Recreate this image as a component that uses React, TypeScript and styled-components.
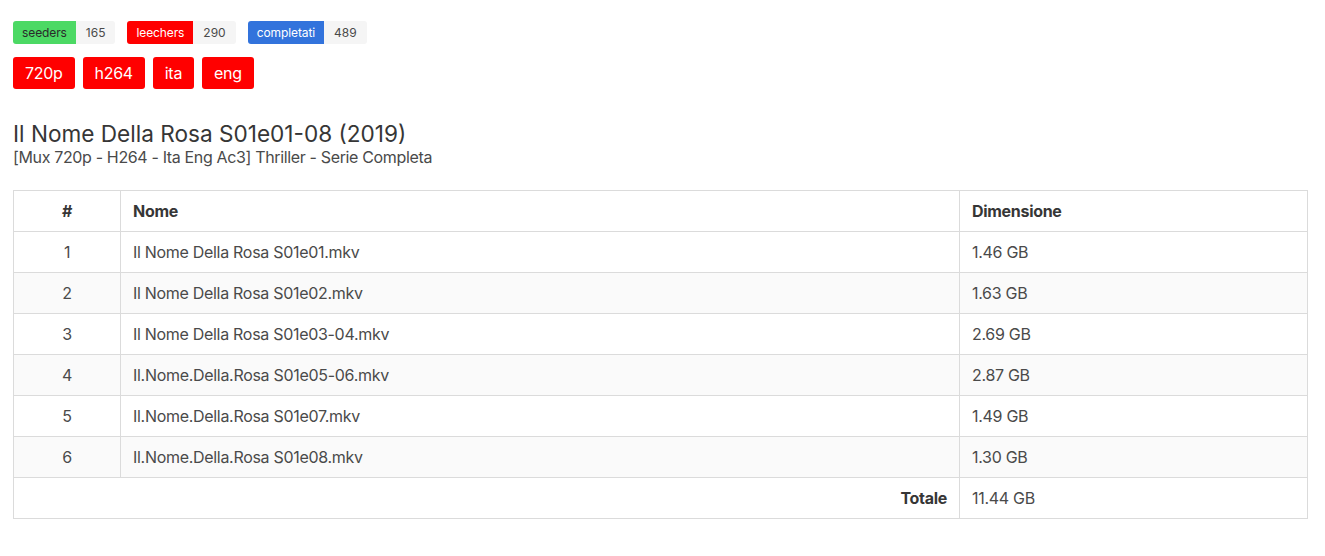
import React from "react";
import styled, { createGlobalStyle } from "styled-components";

const Global = createGlobalStyle`
  html, body { margin: 0; padding: 0; background: #fff; }
  body { font-family: Inter, "Noto Sans", sans-serif; color: #4a4a4a; }
`;

const Page = styled.div`
  padding: 21px 17px 0 13px;
  display: flex;
  flex-direction: column;
`;

const StatRow = styled.div`
  display: flex;
  gap: 12px;
`;

const StatGroup = styled.div`
  display: flex;
`;

const StatLabel = styled.span<{ $bg: string; $fg: string }>`
  display: inline-flex;
  align-items: center;
  height: 23px;
  padding: 0 9px;
  font-size: 12px;
  letter-spacing: -0.1px;
  background: ${(p) => p.$bg};
  color: ${(p) => p.$fg};
  border-radius: 3px 0 0 3px;
`;

const StatCount = styled.span`
  display: inline-flex;
  align-items: center;
  height: 23px;
  padding: 0 10px;
  font-size: 12px;
  background: #f5f5f5;
  color: #4a4a4a;
  border-radius: 0 3px 3px 0;
`;

const TagRow = styled.div`
  display: flex;
  gap: 8px;
  margin-top: 13px;
`;

const Tag = styled.span`
  display: inline-flex;
  align-items: center;
  height: 32px;
  padding: 0 12px;
  font-size: 16px;
  letter-spacing: -0.3px;
  background: #ff0000;
  color: #fff;
  border-radius: 3px;
`;

const Title = styled.h1`
  margin: 32px 0 0;
  font-size: 22.6px;
  font-weight: 400;
  line-height: 26px;
  color: #363636;
`;

const Subtitle = styled.div`
  font-size: 16px;
  letter-spacing: -0.35px;
  line-height: 20px;
  color: #4a4a4a;
`;

const Table = styled.table`
  margin-top: 23px;
  width: 100%;
  table-layout: fixed;
  border-collapse: collapse;
  font-size: 16px;
  letter-spacing: -0.3px;
  color: #4a4a4a;
`;

const Th = styled.th<{ $center?: boolean }>`
  text-align: ${(p) => (p.$center ? "center" : "left")};
  font-weight: 700;
  color: #363636;
  border: 1px solid #dbdbdb;
  padding: 8px 12px;
  line-height: 24px;
`;

const Row = styled.tr<{ $striped?: boolean }>`
  background: ${(p) => (p.$striped ? "#fafafa" : "#fff")};
`;

const Td = styled.td<{ $align?: string; $bold?: boolean }>`
  text-align: ${(p) => p.$align || "left"};
  font-weight: ${(p) => (p.$bold ? 700 : 400)};
  color: ${(p) => (p.$bold ? "#363636" : "#4a4a4a")};
  border: 1px solid #dbdbdb;
  padding: 8px 12px;
  line-height: 24px;
`;

const NumCol = styled.col`
  width: 107px;
`;

const NameCol = styled.col`
  width: 839px;
`;

const files = [
  ["Il Nome Della Rosa S01e01.mkv", "1.46 GB"],
  ["Il Nome Della Rosa S01e02.mkv", "1.63 GB"],
  ["Il Nome Della Rosa S01e03-04.mkv", "2.69 GB"],
  ["Il.Nome.Della.Rosa S01e05-06.mkv", "2.87 GB"],
  ["Il.Nome.Della.Rosa S01e07.mkv", "1.49 GB"],
  ["Il.Nome.Della.Rosa S01e08.mkv", "1.30 GB"],
];

export default function App() {
  return (
    <>
      <Global />
      <Page>
        <StatRow>
          <StatGroup>
            <StatLabel $bg="#4cd964" $fg="#2a2a2a">seeders</StatLabel>
            <StatCount>165</StatCount>
          </StatGroup>
          <StatGroup>
            <StatLabel $bg="#ff0000" $fg="#fff">leechers</StatLabel>
            <StatCount>290</StatCount>
          </StatGroup>
          <StatGroup>
            <StatLabel $bg="#3273dc" $fg="#fff">completati</StatLabel>
            <StatCount>489</StatCount>
          </StatGroup>
        </StatRow>
        <TagRow>
          <Tag>720p</Tag>
          <Tag>h264</Tag>
          <Tag>ita</Tag>
          <Tag>eng</Tag>
        </TagRow>
        <Title>Il Nome Della Rosa S01e01-08 (2019)</Title>
        <Subtitle>[Mux 720p - H264 - Ita Eng Ac3] Thriller - Serie Completa</Subtitle>
        <Table>
          <colgroup>
            <NumCol />
            <NameCol />
            <col />
          </colgroup>
          <thead>
            <tr>
              <Th $center>#</Th>
              <Th>Nome</Th>
              <Th>Dimensione</Th>
            </tr>
          </thead>
          <tbody>
            {files.map(([name, size], i) => (
              <Row key={i} $striped={i % 2 === 1}>
                <Td $align="center">{i + 1}</Td>
                <Td>{name}</Td>
                <Td>{size}</Td>
              </Row>
            ))}
            <Row>
              <Td colSpan={2} $align="right" $bold>Totale</Td>
              <Td>11.44 GB</Td>
            </Row>
          </tbody>
        </Table>
      </Page>
    </>
  );
}
